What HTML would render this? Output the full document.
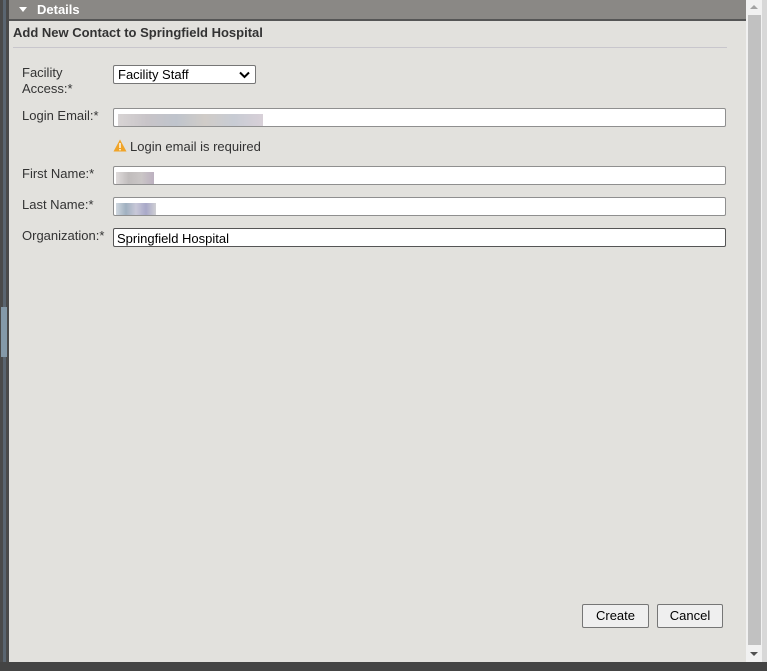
<!DOCTYPE html>
<html><head><style>
body{margin:0;width:767px;height:671px;position:relative;overflow:hidden;background:#e2e1dd;font-family:"Liberation Sans",Arial,sans-serif;font-size:13px;color:#333}
.abs{position:absolute}
.lbl{position:absolute;left:22px;font-size:13px;color:#333}
.inp{position:absolute;left:113px;width:611px;height:19px;background:#fff;border:1px solid #8f8f8f;border-radius:2px;box-sizing:border-box}
.btn{position:absolute;top:604px;height:24px;background:#efefef;border:1px solid #767676;border-radius:2px;box-sizing:border-box;font-size:13px;color:#000;text-align:center;line-height:22px}
</style></head><body>
<div class="abs" style="left:0;top:0;width:9px;height:671px;background:#4a4a4a"></div>
<div class="abs" style="left:3px;top:0;width:3px;height:671px;background:#5a6570"></div>
<div class="abs" style="left:1px;top:307px;width:6px;height:50px;background:#8499a8"></div>
<div class="abs" style="left:9px;top:0;width:737px;height:19px;background:#8a8885;border-bottom:2px solid #555"></div>
<div class="abs" style="left:19px;top:7px;width:0;height:0;border-left:4px solid transparent;border-right:4px solid transparent;border-top:5px solid #fff"></div>
<div class="abs" style="left:37px;top:2px;color:#fff;font-weight:bold;font-size:13px">Details</div>
<div class="abs" style="left:13px;top:25px;font-weight:bold;font-size:13px;color:#333">Add New Contact to Springfield Hospital</div>
<div class="abs" style="left:13px;top:47px;width:714px;height:1px;background:#c8c6cc"></div>
<div class="lbl" style="top:65px;line-height:16px">Facility<br>Access:*</div>
<div class="abs" style="left:113px;top:65px;width:143px;height:19px;background:#fff;border:1px solid #767676;border-radius:2px;box-sizing:border-box;font-size:13px;color:#000;padding:1px 4px;line-height:16px">Facility Staff
<svg class="abs" style="right:5px;top:5px" width="11" height="8" viewBox="0 0 11 8"><path d="M1 1.5L5.5 6 10 1.5" stroke="#000" stroke-width="2" fill="none"/></svg></div>
<div class="lbl" style="top:108px">Login Email:*</div>
<div class="inp" style="top:108px;width:613px"><div class="abs" style="left:4px;top:5px;width:145px;height:12px;background:linear-gradient(90deg,#d8d4d4,#c8c4c8,#bfc4cc,#d0ccc8,#c8ccd4,#d8d0d8)"></div></div>
<svg class="abs" style="left:113px;top:139px" width="14" height="13" viewBox="0 0 14 13"><path d="M7 0.5L13.5 12.5H0.5Z" fill="#f0a428"/><rect x="6.3" y="4" width="1.4" height="5" fill="#fff"/><rect x="6.3" y="10" width="1.4" height="1.4" fill="#fff"/></svg>
<div class="abs" style="left:130px;top:139px;color:#333">Login email is required</div>
<div class="lbl" style="top:166px">First Name:*</div>
<div class="inp" style="top:166px;width:613px"><div class="abs" style="left:2px;top:5px;width:38px;height:12px;background:linear-gradient(90deg,#e0dcdc,#c0bcbc,#cac6c6,#bcb0c0)"></div></div>
<div class="lbl" style="top:197px">Last Name:*</div>
<div class="inp" style="top:197px;width:613px"><div class="abs" style="left:2px;top:5px;width:40px;height:12px;background:linear-gradient(90deg,#d0d8e0,#a0b0c0,#c8c8d8,#a8a8c8,#d0d0d4)"></div></div>
<div class="lbl" style="top:228px">Organization:*</div>
<div class="inp" style="top:228px;width:613px;border-color:#555;color:#000;padding:2px 3px;line-height:15px">Springfield Hospital</div>
<div class="btn" style="left:582px;width:67px">Create</div>
<div class="btn" style="left:657px;width:66px">Cancel</div>
<div class="abs" style="left:746px;top:0;width:16px;height:662px;background:#f1f1f1"></div>
<div class="abs" style="left:748px;top:15px;width:13px;height:630px;background:#c1c1c1"></div>
<div class="abs" style="left:750px;top:5px;width:0;height:0;border-left:4px solid transparent;border-right:4px solid transparent;border-bottom:4px solid #a3a3a3"></div>
<div class="abs" style="left:750px;top:652px;width:0;height:0;border-left:4px solid transparent;border-right:4px solid transparent;border-top:4px solid #505050"></div>
<div class="abs" style="left:762px;top:0;width:5px;height:671px;background:#d8d8d8"></div>
<div class="abs" style="left:0;top:662px;width:767px;height:9px;background:#444"></div>
</body></html>
